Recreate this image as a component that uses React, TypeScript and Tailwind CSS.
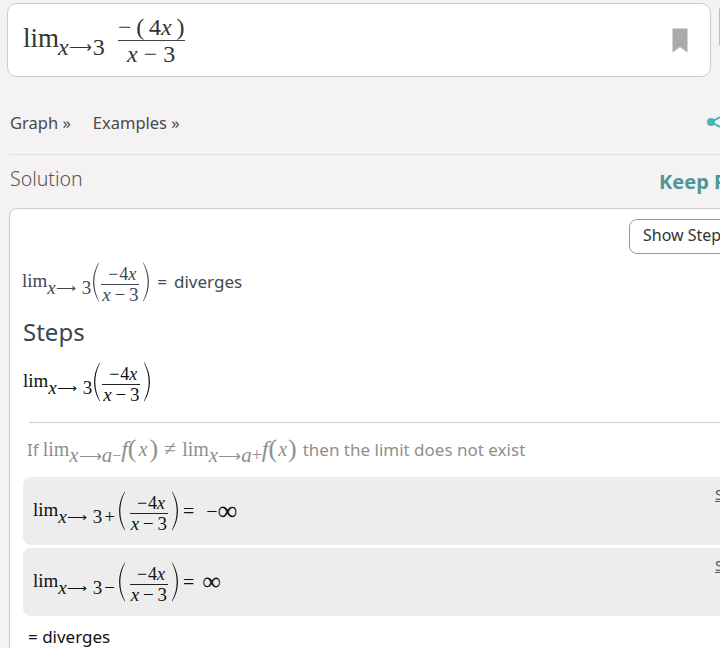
const serif = 'font-["Liberation_Serif",serif]'

function Paren({ flip }: { flip?: boolean }) {
  return (
    <svg width="8" height="40" viewBox="0 0 9 40" preserveAspectRatio="none" className={`shrink-0 ${flip ? '-scale-x-100' : ''}`}>
      <path d="M7.6 0.5C3.2 7 1.2 13 1.2 20s2 13 6.4 19.5l.4-.3C4.4 32.5 2.6 27 2.6 20S4.4 7.5 8 .8z" fill="currentColor" />
    </svg>
  )
}

function Frac({ lineCls }: { lineCls: string }) {
  return (
    <span className="inline-flex flex-col items-center">
      <span className="h-[20px] whitespace-nowrap pl-[4px] leading-[20px]">
        <span className="mr-[1px]">−</span>4<i>x</i>
      </span>
      <span className={`h-px w-[38px] ${lineCls}`} />
      <span className="h-[19px] whitespace-nowrap text-[19px] leading-[20px]">
        <i>x</i>&thinsp;−&thinsp;3
      </span>
    </span>
  )
}

function LimExpr({ sign, lineCls = 'bg-[#222]' }: { sign?: string; lineCls?: string }) {
  return (
    <span className={`flex h-[40px] items-center text-[18px] ${serif}`}>
      <span className="mt-[-2px] text-[19px]">lim</span>
      <span className="mt-[12px] flex items-center whitespace-nowrap">
        <i className="text-[19px]">x</i>
        <span className="text-[14px]">⟶</span>
        <span className="ml-[6px] text-[19px]">3</span>
        {sign && <span className="ml-[2px] text-[19px]">{sign}</span>}
      </span>
      <span className={sign ? 'ml-[3px]' : 'ml-px'}>
        <Paren />
      </span>
      <span className={`mr-[3px] ${sign ? 'ml-[4px]' : 'ml-px'}`}>
        <Frac lineCls={lineCls} />
      </span>
      <Paren flip />
    </span>
  )
}

function StepBox({ sign, children }: { sign: string; children: React.ReactNode }) {
  return (
    <div className="relative flex h-[68px] items-center rounded-lg bg-[#ededed] pl-[10px] text-[#111]">
      <LimExpr sign={sign} />
      {children}
      <span className="absolute left-[692px] top-[6px] text-[15px] text-[#555] underline">S</span>
    </div>
  )
}

export default function App() {
  return (
    <div className="h-[648px] w-[720px] overflow-hidden bg-[#f4f2f3] font-['Noto_Sans',sans-serif] text-[#4a4a4a]">
      <div className="flex w-[760px] items-start gap-2 pl-[7px] pt-[3px]">
        <div className="flex h-[74px] w-[704px] shrink-0 items-center justify-between rounded-[10px] border border-[#cccccc] bg-white pl-[15px] pr-[22px]">
          <div className={`flex items-center text-[#333] ${serif} text-[27px]`}>
            <span className="mt-[-3px]">lim</span>
            <span className="mt-[13px] flex items-center text-[24px]">
              <i className="-ml-[1px]">x</i>
              <span className="text-[16px]">⟶</span>
              <span className="ml-[1px]">3</span>
            </span>
            <span className="ml-[13px] inline-flex flex-col items-center">
              <span className="flex h-[26px] items-center whitespace-nowrap text-[24px] leading-none">
                −&thinsp;(&thinsp;4<i>x</i>&thinsp;)
              </span>
              <span className="h-px w-[67px] bg-[#444]" />
              <span className="flex h-[25px] items-center whitespace-nowrap text-[24px] leading-none">
                <i>x</i>&nbsp;−&nbsp;3
              </span>
            </span>
          </div>
          <svg width="16" height="25" viewBox="0 0 16 25" aria-hidden="true">
            <path d="M0.5 0.5h15v24L8 19l-7.5 5.5z" fill="#aaaaaa" />
          </svg>
        </div>
        <div className="mt-[3px] h-[42px] w-[10px] shrink-0 rounded-l-sm border border-[#bbb] bg-[#e4e4e4]" />
      </div>

      <div className="ml-[9px] mt-[34px] flex h-[44px] w-[711px] items-start justify-between border-b border-[#e0e0e0] text-[16.5px] text-[#4a4a4a]">
        <div className="flex gap-[22px] pl-px">
          <span>Graph »</span>
          <span>Examples »</span>
        </div>
        <svg width="14" height="16" viewBox="0 0 14 16" className="mt-[3px] shrink-0" aria-hidden="true">
          <circle cx="5" cy="8" r="4" fill="#4cb5b0" />
          <path d="M5 8l9-5M5 8l9 5" stroke="#4cb5b0" strokeWidth="2" />
        </svg>
      </div>

      <div className="ml-[9px] flex h-[53px] w-[711px] items-start justify-between overflow-hidden pt-[9px]">
        <span className="pl-px text-[19.5px] font-light text-[#555]">Solution</span>
        <span className="mt-[3px] w-[61px] overflow-hidden whitespace-nowrap text-[20px] font-bold text-[#4f9694]">Keep Practicing</span>
      </div>

      <div className="ml-[9px] w-[760px] rounded-t-lg border border-[#cccccc] bg-white pb-10 pl-[13px]">
        <div className="flex h-[45px] items-end justify-start pl-[606px]">
          <span className="flex h-[35px] w-[140px] items-center whitespace-nowrap rounded-lg border border-[#999] pb-[3px] pl-[13px] text-[16px] text-[#333]">
            Show Steps
          </span>
        </div>
        <div className="-ml-px mt-[8px] flex items-center text-[#3c4a50]">
          <LimExpr lineCls="bg-[#3c4a50]" />
          <span className="ml-[7px] text-[17px]">=</span>
          <span className="ml-[7px] text-[17px]">diverges</span>
        </div>
        <div className="mt-[14px] h-[32px] text-[24px] leading-[32px] text-[#37474f]">Steps</div>
        <div className="mt-[14px] flex text-[#111]">
          <LimExpr />
        </div>
        <div className="ml-[6px] mt-[20px] h-px bg-[#cccccc]" />
        <div className="mt-[13px] flex h-[28px] items-center pl-[4px] text-[17px] text-[#8f8f8f]">
          <span>If</span>
          <span className={`ml-1 flex items-center text-[20px] ${serif}`}>
            <span className="mt-[-3px]">lim</span>
            <span className="mt-[11px] flex items-center text-[21px]">
              <i>x</i><span className="text-[16px]">⟶</span><i>a</i><span className="text-[16px]">−</span>
            </span>
            <i className="mt-[-3px] text-[24px]">f</i>
            <span className="mt-[-3px] text-[26px] font-light">(</span>
            <i className="mx-[2px] mt-[-3px]">x</i>
            <span className="mt-[-3px] text-[26px]">)</span>
            <span className="mx-[6px] mt-[-3px] text-[22px]">≠</span>
            <span className="mt-[-3px]">lim</span>
            <span className="mt-[11px] flex items-center text-[21px]">
              <i>x</i><span className="text-[16px]">⟶</span><i>a</i><span className="text-[18px]">+</span>
            </span>
            <i className="mt-[-3px] text-[24px]">f</i>
            <span className="mt-[-3px] text-[26px]">(</span>
            <i className="mx-[1px] mt-[-3px]">x</i>
            <span className="mt-[-3px] text-[26px]">)</span>
          </span>
          <span className="ml-[6px] whitespace-nowrap">then the limit does not exist</span>
        </div>
        <div className="mt-[13px] flex flex-col gap-[3px]">
          <StepBox sign="+">
            <span className={`ml-[4px] flex items-center text-[20px] ${serif}`}>=<span className="ml-[12px]">−</span><span className="text-[28px] leading-none">∞</span></span>
          </StepBox>
          <StepBox sign="−">
            <span className={`ml-[4px] flex items-center text-[20px] ${serif}`}>=<span className="ml-[8px] text-[26px] leading-none">∞</span></span>
          </StepBox>
        </div>
        <div className="mt-[9px] pl-[5px] text-[17px] leading-[24px] text-[#111]">= diverges</div>
      </div>
    </div>
  )
}
